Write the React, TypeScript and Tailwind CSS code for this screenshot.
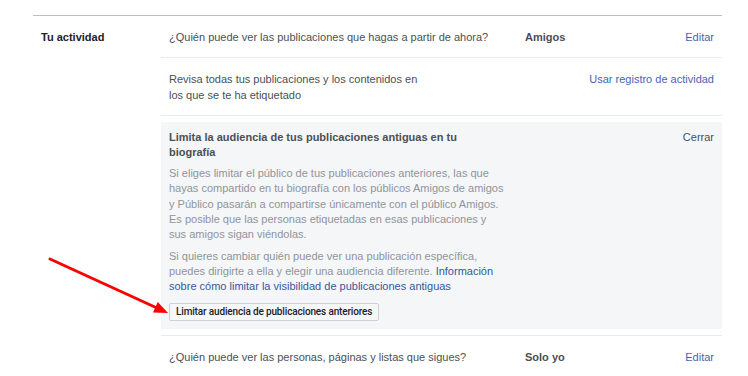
import React from 'react';

const font = { fontFamily: '"Liberation Sans", Arial, Helvetica, sans-serif' };

const Row: React.FC<{ question: React.ReactNode; value?: string; link: string; first?: boolean }> = ({ question, value, link, first }) => (
  <div className={`flex items-start pt-[14px] pb-[12px] pl-2 pr-2 ${first ? '' : 'border-t border-[#e9ebee]'}`}>
    <div className="w-[356px] shrink-0 text-[#4b4f56]">{question}</div>
    <div className="flex-1 font-bold text-[#4b4f56]">{value}</div>
    <a className="text-[#4267b2] whitespace-nowrap cursor-pointer">{link}</a>
  </div>
);

const App: React.FC = () => {
  return (
    <div className="relative w-[748px] h-[376px] overflow-hidden bg-white text-[11px] leading-[15.36px]" style={font}>
      <div className="pt-[15px] pl-[33px] pr-[26px]">
        <div className="flex border-t border-[#bdbdbd]">
          {/* Section label */}
          <div className="w-[128px] shrink-0 pl-2 pt-[14px] font-bold text-[#1d2129]">Tu actividad</div>

          {/* Settings rows */}
          <div className="flex-1">
            <Row first question="¿Quién puede ver las publicaciones que hagas a partir de ahora?" value="Amigos" link="Editar" />
            <div className="flex items-start pt-[14px] pb-[12px] pl-2 pr-2 border-t border-[#e9ebee]">
              <div className="w-[252px] text-[#4b4f56]">
                Revisa todas tus publicaciones y los contenidos en los que se te ha etiquetado
              </div>
              <div className="flex-1" />
              <a className="text-[#4267b2] whitespace-nowrap cursor-pointer">Usar registro de actividad</a>
            </div>

            <div className="border-t border-[#e9ebee] pt-[6px]">
              <div className="bg-[#f5f6f7] flex items-start px-2 pt-[8px] pb-2">
                <div className="w-[337px]">
                  <div className="w-[320px] font-bold text-[#4b4f56]">
                    Limita la audiencia de tus publicaciones antiguas en tu biografía
                  </div>
                  <p className="mt-[5px] text-[#90949c]">
                    Si eliges limitar el público de tus publicaciones anteriores, las que hayas compartido en tu biografía con los públicos Amigos de amigos y Público pasarán a compartirse únicamente con el público Amigos. Es posible que las personas etiquetadas en esas publicaciones y sus amigos sigan viéndolas.
                  </p>
                  <p className="mt-[6px] text-[#90949c]">
                    Si quieres cambiar quién puede ver una publicación específica, puedes dirigirte a ella y elegir una audiencia diferente.{' '}
                    <a className="text-[#365899] cursor-pointer">Información sobre cómo limitar la visibilidad de publicaciones antiguas</a>
                  </p>
                  <button
                    className="mt-[8px] h-[18px] px-[6px] border border-[#ced0d4] bg-[#f6f7f9] text-[10px] leading-[16px] font-medium tracking-[-0.15px] text-[#1d2129] rounded-[2px]"
                    style={{ fontFamily: 'Roboto, "Liberation Sans", Arial, sans-serif' }}
                  >
                    Limitar audiencia de publicaciones anteriores
                  </button>
                </div>
                <div className="flex-1" />
                <a className="text-[#4b4f56] cursor-pointer">Cerrar</a>
              </div>
            </div>

            <div className="mt-[6px]">
              <Row question="¿Quién puede ver las personas, páginas y listas que sigues?" value="Solo yo" link="Editar" />
            </div>
          </div>
        </div>
      </div>

      {/* Red annotation arrow */}
      <svg className="absolute left-0 top-0 pointer-events-none" width="748" height="376">
        <line x1="50" y1="259" x2="157" y2="308" stroke="#ff0000" strokeWidth="3" strokeLinecap="round" />
        <polygon points="168,313 153,312.5 157.8,302" fill="#ff0000" />
      </svg>
    </div>
  );
};

export default App;
